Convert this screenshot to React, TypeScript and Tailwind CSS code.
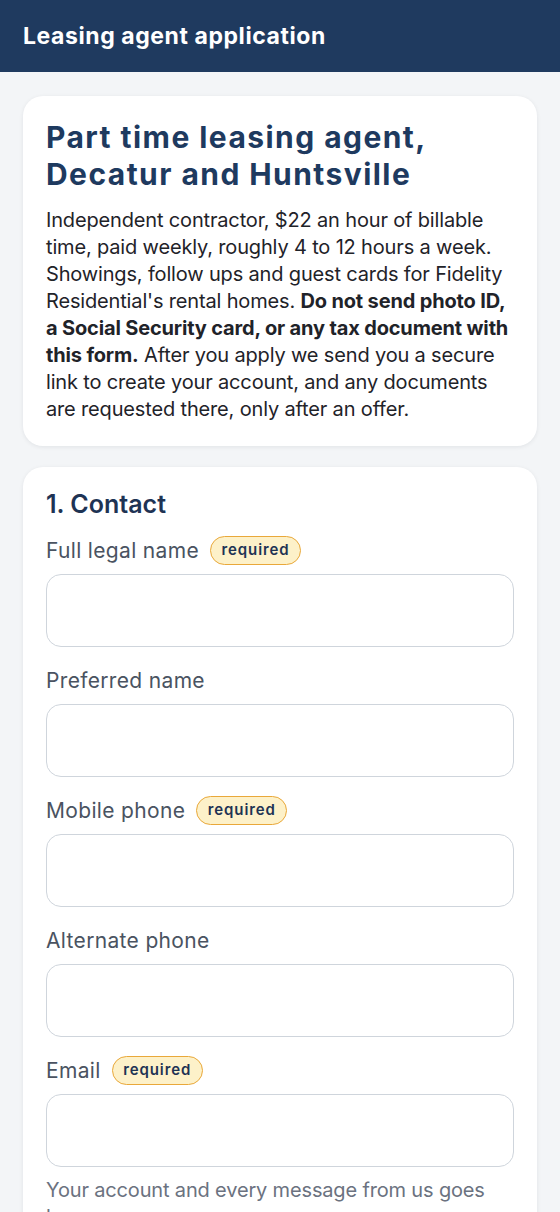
import React from 'react';

const inter = { fontFamily: 'Inter, "Noto Sans", sans-serif' };

interface FieldProps {
  label: string;
  required?: boolean;
  type?: string;
  hint?: string;
}

const Field: React.FC<FieldProps> = ({ label, required, type = 'text', hint }) => {
  return (
    <div className="flex flex-col">
      <div className="flex h-[29px] items-center gap-[11px]">
        <label className="text-[21px] leading-[29px] tracking-[0.016em] text-[#4a5361]">{label}</label>
        {required && (
          <span className="box-border flex h-[29px] items-center rounded-full border-[1.5px] border-[#e9a83a] bg-[#fdf1c9] px-[10.5px] text-[15px] font-semibold tracking-[0.06em] text-[#1e3354]">
            required
          </span>
        )}
      </div>
      <input
        type={type}
        className="mt-[9px] h-[73px] w-full rounded-[15px] border border-[#cfd5dc] bg-white px-4 text-[20px] outline-none"
      />
      {hint && (
        <p className="mt-[10px] text-[20px] leading-[27px] tracking-[-0.008em] text-[#6b7280]">{hint}</p>
      )}
    </div>
  );
};

export default function App() {
  return (
    <div className="min-h-screen bg-[#f3f5f7]" style={inter}>
      {/* Header */}
      <header className="flex h-[72px] items-center bg-[#1f3a5f] px-[23px]">
        <h1 className="text-[23px] font-bold leading-[32px] tracking-[0.025em] text-white">
          Leasing agent application
        </h1>
      </header>

      <main className="flex flex-col gap-[21px] px-[23px] pt-6 pb-8">
        {/* Intro card */}
        <section className="rounded-[20px] bg-white px-[23px] pt-[23px] pb-[23px] shadow-[0_1px_4px_rgba(15,23,42,0.08)]">
          <h2 className="text-[30px] font-bold leading-[37px] tracking-[0.048em] text-[#1e3a5f]">
            Part time leasing agent, Decatur and Huntsville
          </h2>
          <p className="mt-[14px] text-[20px] leading-[27px] tracking-[-0.008em] text-[#1f2329]">
            Independent contractor, $22 an hour of billable time, paid weekly, roughly 4 to 12 hours a week.
            Showings, follow ups and guest cards for Fidelity Residential's rental homes.{' '}
            <strong className="font-bold">
              Do not send photo ID, a Social Security card, or any tax document with this form.
            </strong>{' '}
            After you apply we send you a secure link to create your account, and any documents are requested
            there, only after an offer.
          </p>
        </section>

        {/* Contact card */}
        <section className="rounded-[20px] bg-white px-[23px] pt-[21px] pb-8 shadow-[0_1px_4px_rgba(15,23,42,0.08)]">
          <h3 className="text-[25px] font-semibold leading-[32px] text-[#1e3354]">1. Contact</h3>
          <div className="mt-4 flex flex-col gap-[19px]">
            <Field label="Full legal name" required />
            <Field label="Preferred name" />
            <Field label="Mobile phone" required type="tel" />
            <Field label="Alternate phone" type="tel" />
            <Field
              label="Email"
              required
              type="email"
              hint="Your account and every message from us goes here."
            />
          </div>
        </section>
      </main>
    </div>
  );
}
